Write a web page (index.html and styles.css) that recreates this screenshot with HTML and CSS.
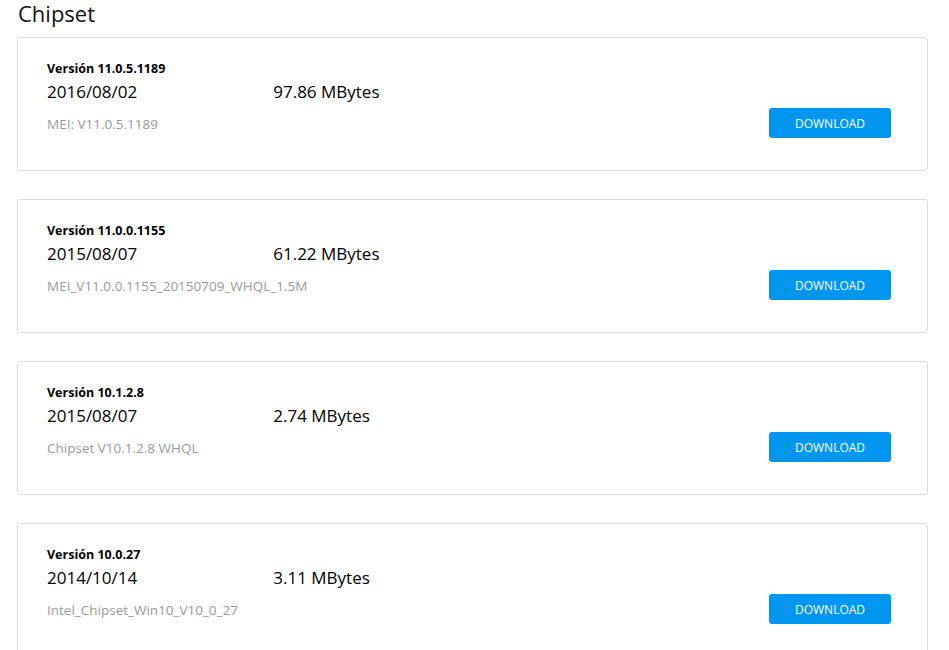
FILE: index.html
```html
<!DOCTYPE html>
<html lang="es">
<head>
    <meta charset="UTF-8">
    <meta name="viewport" content="width=device-width, initial-scale=1.0">
    <title>Chipset</title>
    <link rel="stylesheet" href="styles.css">
</head>
<body>
    <div class="page">
        <h2 class="section-title">Chipset</h2>

        <div class="driver">
            <div class="driver-info">
                <p class="version">Versión 11.0.5.1189</p>
                <p class="meta"><span class="date">2016/08/02</span><span class="size">97.86 MBytes</span></p>
                <p class="desc">MEI: V11.0.5.1189</p>
            </div>
            <button class="download">DOWNLOAD</button>
        </div>

        <div class="driver">
            <div class="driver-info">
                <p class="version">Versión 11.0.0.1155</p>
                <p class="meta"><span class="date">2015/08/07</span><span class="size">61.22 MBytes</span></p>
                <p class="desc">MEI_V11.0.0.1155_20150709_WHQL_1.5M</p>
            </div>
            <button class="download">DOWNLOAD</button>
        </div>

        <div class="driver">
            <div class="driver-info">
                <p class="version">Versión 10.1.2.8</p>
                <p class="meta"><span class="date">2015/08/07</span><span class="size">2.74 MBytes</span></p>
                <p class="desc">Chipset V10.1.2.8 WHQL</p>
            </div>
            <button class="download">DOWNLOAD</button>
        </div>

        <div class="driver">
            <div class="driver-info">
                <p class="version">Versión 10.0.27</p>
                <p class="meta"><span class="date">2014/10/14</span><span class="size">3.11 MBytes</span></p>
                <p class="desc">Intel_Chipset_Win10_V10_0_27</p>
            </div>
            <button class="download">DOWNLOAD</button>
        </div>
    </div>
</body>
</html>
```

FILE: styles.css
```css
body {
    margin: 0;
    background-color: #fff;
    color: #000;
    font-family: 'Open Sans', 'Noto Sans', sans-serif;
}

.page {
    padding: 0 21px 0 17px;
}

.section-title {
    margin: 0;
    padding: 0 0 0 1px;
    height: 37px;
    font-size: 22px;
    font-weight: 400;
    line-height: 26px;
    color: #111;
}

.driver {
    display: flex;
    justify-content: space-between;
    align-items: flex-end;
    height: 134px;
    box-sizing: border-box;
    margin-bottom: 28px;
    padding: 22px 36px 32px 29px;
    border: 1px solid #dcdcdc;
    border-radius: 3px;
}

.driver-info p {
    margin: 0;
}

.driver-info {
    align-self: flex-start;
}

.version {
    font-size: 12.5px;
    font-weight: 700;
    line-height: 18px;
}

.meta {
    margin-top: 2px !important;
    font-size: 17px;
    line-height: 24px;
}

.size {
    margin-left: 136px;
}

.desc {
    margin-top: 11px !important;
    font-size: 13.5px;
    line-height: 18px;
    color: #9a9a9a;
}

.download {
    width: 122px;
    height: 30px;
    padding: 0;
    border: none;
    border-radius: 3px;
    background-color: #0096f0;
    color: #fff;
    font-family: 'Open Sans', 'Noto Sans', sans-serif;
    font-size: 12px;
    cursor: pointer;
}
```
